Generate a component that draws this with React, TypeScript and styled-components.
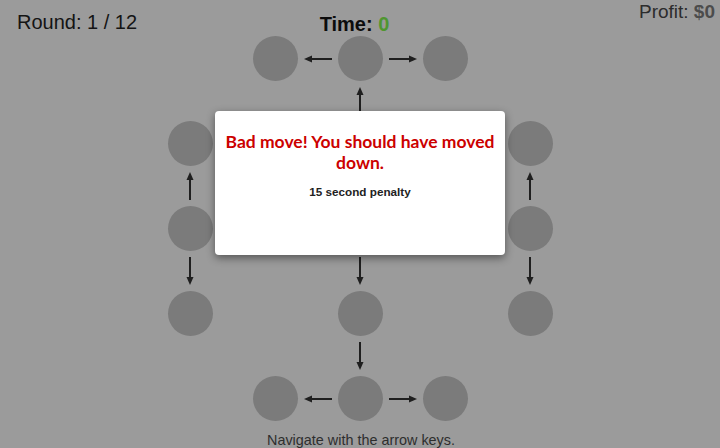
import React from "react";
import styled, { createGlobalStyle } from "styled-components";

const GlobalStyle = createGlobalStyle`
  html, body {
    margin: 0;
    padding: 0;
    background: #9b9b9b;
  }
  body {
    font-family: "Liberation Sans", Arial, sans-serif;
  }
`;

const Page = styled.div`
  position: relative;
  width: 720px;
  height: 448px;
  overflow: hidden;
  background: #9b9b9b;
  display: flex;
  flex-direction: column;
`;

const TopBar = styled.div`
  display: grid;
  grid-template-columns: 1fr auto 1fr;
  align-items: start;
  height: 36px;
`;

const Round = styled.div`
  font-size: 20px;
  color: #141414;
  padding: 10px 0 0 17px;
  line-height: 24px;
`;

const Time = styled.div`
  font-size: 20px;
  font-weight: bold;
  color: #0c0c0c;
  padding: 12px 11px 0 0;
  line-height: 24px;
`;

const TimeValue = styled.span`
  color: #4f9630;
`;

const Profit = styled.div`
  justify-self: end;
  font-size: 19px;
  color: #2c2c2c;
  padding: 0 5px 0 0;
  line-height: 24px;
`;

const ProfitValue = styled.span`
  font-weight: bold;
  color: #4c4c4c;
`;

const Board = styled.div`
  align-self: center;
  display: grid;
  grid-template-columns: repeat(4, 45px 40px) 45px;
  grid-template-rows: repeat(4, 45px 40px) 45px;
`;

const Node = styled.div<{ $row: number; $col: number }>`
  grid-row: ${({ $row }) => $row};
  grid-column: ${({ $col }) => $col};
  width: 45px;
  height: 45px;
  border-radius: 50%;
  background: #7b7b7b;
`;

const ArrowCell = styled.div<{ $row: number; $col: number }>`
  grid-row: ${({ $row }) => $row};
  grid-column: ${({ $col }) => $col};
  display: flex;
  align-items: center;
  justify-content: center;
  color: #1f1f1f;
`;

const Hint = styled.div`
  text-align: center;
  font-size: 14.4px;
  color: #2e2e2e;
  margin-top: 10px;
  padding-left: 2px;
  line-height: 18px;
`;

const Modal = styled.div`
  position: absolute;
  left: 215px;
  top: 111px;
  width: 290px;
  height: 144px;
  background: #ffffff;
  border-radius: 4px;
  box-shadow: 0 3px 9px rgba(0, 0, 0, 0.45);
  text-align: center;
`;

const ModalTitle = styled.div`
  font-family: Lato, "Open Sans", sans-serif;
  font-weight: 700;
  font-size: 17.5px;
  line-height: 21px;
  color: #cc0000;
  padding: 20px 8px 0;
`;

const ModalBody = styled.div`
  font-family: "Liberation Sans", Arial, sans-serif;
  font-weight: bold;
  font-size: 11.7px;
  line-height: 14px;
  color: #222;
  margin-top: 12px;
`;

type Dir = "up" | "down" | "left" | "right";

const rotation: Record<Dir, number> = { right: 0, down: 90, left: 180, up: 270 };

const Arrow = ({ dir }: { dir: Dir }) => (
  <svg
    width="28"
    height="28"
    viewBox="0 0 28 28"
    style={{ transform: `rotate(${rotation[dir]}deg)` }}
  >
    <line x1="0" y1="14" x2="22" y2="14" stroke="currentColor" strokeWidth="2" />
    <polygon points="28,14 20,10.5 20,17.5" fill="currentColor" />
  </svg>
);

// node coordinates on a 5x5 lattice
const nodes: [number, number][] = [
  [0, 1], [0, 2], [0, 3],
  [1, 0], [1, 2], [1, 4],
  [2, 0], [2, 2], [2, 4],
  [3, 0], [3, 2], [3, 4],
  [4, 1], [4, 2], [4, 3],
];

// arrows sit between nodes, so one coordinate is a half step
const arrows: { r: number; c: number; dir: Dir }[] = [
  { r: 0, c: 1.5, dir: "left" },
  { r: 0, c: 2.5, dir: "right" },
  { r: 0.5, c: 2, dir: "up" },
  { r: 1.5, c: 0, dir: "up" },
  { r: 1.5, c: 4, dir: "up" },
  { r: 1.5, c: 2, dir: "down" },
  { r: 2.5, c: 0, dir: "down" },
  { r: 2.5, c: 2, dir: "down" },
  { r: 2.5, c: 4, dir: "down" },
  { r: 3.5, c: 2, dir: "down" },
  { r: 4, c: 1.5, dir: "left" },
  { r: 4, c: 2.5, dir: "right" },
];

const track = (n: number) => n * 2 + 1;

const App = () => {
  return (
    <Page>
      <GlobalStyle />
      <TopBar>
        <Round>Round: 1 / 12</Round>
        <Time>
          Time: <TimeValue>0</TimeValue>
        </Time>
        <Profit>
          Profit: <ProfitValue>$0</ProfitValue>
        </Profit>
      </TopBar>
      <Board>
        {nodes.map(([r, c]) => (
          <Node key={`n${r}-${c}`} $row={track(r)} $col={track(c)} />
        ))}
        {arrows.map((a) => (
          <ArrowCell key={`a${a.r}-${a.c}`} $row={track(a.r)} $col={track(a.c)}>
            <Arrow dir={a.dir} />
          </ArrowCell>
        ))}
      </Board>
      <Hint>Navigate with the arrow keys.</Hint>
      <Modal>
        <ModalTitle>Bad move! You should have moved down.</ModalTitle>
        <ModalBody>15 second penalty</ModalBody>
      </Modal>
    </Page>
  );
};

export default App;
